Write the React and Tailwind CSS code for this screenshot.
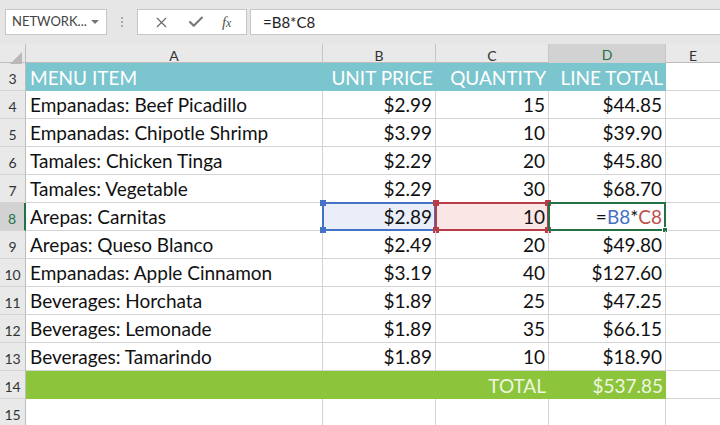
import React from 'react';
import { X, Check } from 'lucide-react';

const rows = [
  ['Empanadas: Beef Picadillo', '$2.99', '15', '$44.85'],
  ['Empanadas: Chipotle Shrimp', '$3.99', '10', '$39.90'],
  ['Tamales: Chicken Tinga', '$2.29', '20', '$45.80'],
  ['Tamales: Vegetable', '$2.29', '30', '$68.70'],
  ['Arepas: Carnitas', '$2.89', '10', null],
  ['Arepas: Queso Blanco', '$2.49', '20', '$49.80'],
  ['Empanadas: Apple Cinnamon', '$3.19', '40', '$127.60'],
  ['Beverages: Horchata', '$1.89', '25', '$47.25'],
  ['Beverages: Lemonade', '$1.89', '35', '$66.15'],
  ['Beverages: Tamarindo', '$1.89', '10', '$18.90'],
];

const cols = 'grid grid-cols-[26px_297px_113px_113px_117px_1fr]';

function RowHead({ n, active }) {
  return (
    <div
      className={`h-[28px] flex items-end justify-center pb-[1px] text-[14px] border-b border-[#d4d4d4] ${
        active
          ? 'bg-[#d2d2d2] text-[#217346] border-r-2 border-r-[#217346]'
          : 'bg-[#e9e9e9] text-[#333] border-r border-r-[#bdbdbd]'
      }`}
    >
      {n}
    </div>
  );
}

function Handle({ className, color }) {
  return <span className={`absolute w-[6px] h-[6px] ${color} ${className}`} />;
}

export default function App() {
  return (
    <div className="w-[720px] h-[425px] overflow-hidden bg-white font-['Lato','Liberation_Sans',sans-serif] text-[#111]">
      {/* Formula bar */}
      <div className="h-[44px] bg-[#e6e6e6] flex items-center pl-[5px]">
        <div className="w-[102px] h-[26px] bg-white border border-[#c6c6c6] flex items-center justify-between pl-[6px] pr-[7px] text-[13px] text-[#444]">
          <span>NETWORK...</span>
          <span className="w-0 h-0 border-l-[4px] border-r-[4px] border-t-[4px] border-l-transparent border-r-transparent border-t-[#777]" />
        </div>
        <div className="w-[30px] flex flex-col items-center gap-[2px]">
          <span className="w-[2px] h-[2px] bg-[#aaa]" />
          <span className="w-[2px] h-[2px] bg-[#aaa]" />
          <span className="w-[2px] h-[2px] bg-[#aaa]" />
        </div>
        <div className="w-[110px] h-[26px] bg-white border border-[#c6c6c6] flex items-center justify-around px-[6px] text-[#666]">
          <X size={17} strokeWidth={1.5} />
          <Check size={18} strokeWidth={2.8} className="text-[#777]" />
          <span className="font-['Liberation_Serif',serif] italic text-[15px] text-[#555]">
            f<span className="text-[12px]">x</span>
          </span>
        </div>
        <div className="ml-[3px] flex-1 h-[26px] bg-white border border-[#c6c6c6] border-r-0 flex items-center pl-[12px] text-[15px] text-[#222]">
          =B8*C8
        </div>
      </div>

      {/* Column headers */}
      <div className={`${cols} h-[19px] bg-[#e9e9e9] border-b border-[#bdbdbd] text-[14px] text-[#333]`}>
        <div className="relative border-r border-[#bdbdbd]">
          <span className="absolute right-[3px] bottom-[3px] w-0 h-0" style={{ borderLeft: '12px solid transparent', borderBottom: '12px solid #b9b9b9' }} />
        </div>
        <div className="flex items-center justify-center border-r border-[#c6c6c6]">A</div>
        <div className="flex items-center justify-center border-r border-[#c6c6c6]">B</div>
        <div className="flex items-center justify-center border-r border-[#c6c6c6]">C</div>
        <div className="flex items-center justify-center bg-[#d2d2d2] text-[#217346] border-b-2 border-[#217346] border-r border-r-[#c6c6c6]">D</div>
        <div className="flex items-center justify-center">E</div>
      </div>

      {/* Row 3 header */}
      <div className={`${cols} text-[19px]`}>
        <RowHead n={3} />
        <div className="h-[28px] bg-[#7ac5ce] text-white flex items-center pt-[2px] pl-[4px]">MENU ITEM</div>
        <div className="h-[28px] bg-[#7ac5ce] text-white flex items-center pt-[2px] justify-end pr-[3px]">UNIT PRICE</div>
        <div className="h-[28px] bg-[#7ac5ce] text-white flex items-center pt-[2px] justify-end pr-[3px]">QUANTITY</div>
        <div className="h-[28px] bg-[#7ac5ce] text-white flex items-center pt-[2px] justify-end pr-[3px]">LINE TOTAL</div>
        <div className="h-[28px] border-b border-[#d4d4d4]" />
      </div>

      {rows.map((r, i) => {
        const n = i + 4;
        const sel = n === 8;
        return (
          <div key={n} className={`${cols} text-[19px]`}>
            <RowHead n={n} active={sel} />
            <div className="h-[28px] flex items-center pt-[2px] pl-[4px] border-r border-b border-[#d4d4d4] whitespace-nowrap">
              {r[0]}
            </div>
            <div
              className={`relative h-[28px] flex items-center pt-[2px] justify-end pr-[3px] border-r border-b border-[#d4d4d4] ${
                sel ? 'bg-[#e9eef9]' : ''
              }`}
            >
              {sel && (
                <>
                  <span className="absolute inset-[-1px] border-2 border-[#4472c4] pointer-events-none" />
                  <Handle color="bg-[#4472c4]" className="left-[-3px] top-[-3px]" />
                  <Handle color="bg-[#4472c4]" className="left-[-3px] bottom-[-3px]" />
                </>
              )}
              <span className="relative">{r[1]}</span>
            </div>
            <div
              className={`relative h-[28px] flex items-center pt-[2px] justify-end pr-[3px] border-r border-b border-[#d4d4d4] ${
                sel ? 'bg-[#fbe6e6]' : ''
              }`}
            >
              {sel && (
                <>
                  <span className="absolute inset-[-1px] border-2 border-[#b83b48] pointer-events-none" />
                  <Handle color="bg-[#b83b48]" className="left-[-3px] top-[-3px]" />
                  <Handle color="bg-[#b83b48]" className="left-[-3px] bottom-[-3px]" />
                  <Handle color="bg-[#b83b48]" className="right-[-3px] top-[-3px]" />
                  <Handle color="bg-[#b83b48]" className="right-[-3px] bottom-[-3px]" />
                </>
              )}
              <span className="relative">{r[2]}</span>
            </div>
            <div className="relative h-[28px] flex items-center pt-[2px] justify-end pr-[3px] border-r border-b border-[#d4d4d4]">
              {sel ? (
                <>
                  <span className="absolute inset-[-1px] border-2 border-[#217346] pointer-events-none" />
                  <Handle color="bg-[#217346]" className="right-[-3px] bottom-[-3px] border border-white" />
                  <span className="relative">
                    =<span className="text-[#4472c4]">B8</span>*<span className="text-[#c0504d]">C8</span>
                  </span>
                </>
              ) : (
                r[3]
              )}
            </div>
            <div className="h-[28px] border-b border-[#d4d4d4]" />
          </div>
        );
      })}

      {/* Row 14 total */}
      <div className={`${cols} text-[19px]`}>
        <RowHead n={14} />
        <div className="h-[28px] bg-[#8cc43c]" />
        <div className="h-[28px] bg-[#8cc43c]" />
        <div className="h-[28px] bg-[#8cc43c] text-[#eef7e0] flex items-center pt-[2px] justify-end pr-[3px]">TOTAL</div>
        <div className="h-[28px] bg-[#8cc43c] text-[#eef7e0] flex items-center pt-[2px] justify-end pr-[3px]">$537.85</div>
        <div className="h-[28px] border-b border-[#d4d4d4]" />
      </div>

      {/* Row 15 */}
      <div className={`${cols} text-[19px]`}>
        <RowHead n={15} />
        <div className="h-[28px] border-r border-b border-[#d4d4d4]" />
        <div className="h-[28px] border-r border-b border-[#d4d4d4]" />
        <div className="h-[28px] border-r border-b border-[#d4d4d4]" />
        <div className="h-[28px] border-r border-b border-[#d4d4d4]" />
        <div className="h-[28px] border-b border-[#d4d4d4]" />
      </div>
    </div>
  );
}
